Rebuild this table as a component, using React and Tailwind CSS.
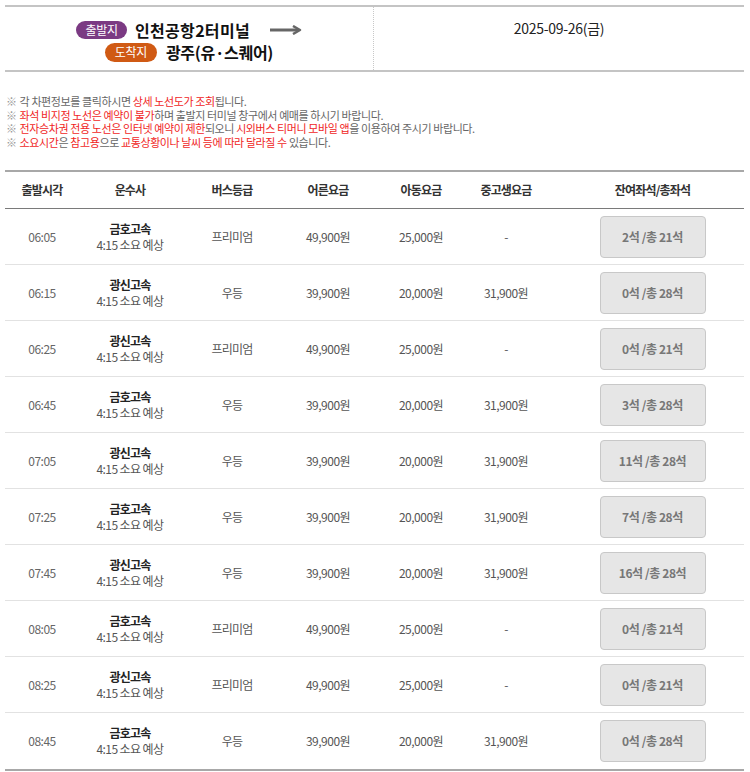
import React from 'react';

const rows = [
  { time: '06:05', company: '금호고속', grade: '프리미엄', adult: '49,900원', child: '25,000원', teen: '-', seats: '2석 /총 21석' },
  { time: '06:15', company: '광신고속', grade: '우등', adult: '39,900원', child: '20,000원', teen: '31,900원', seats: '0석 /총 28석' },
  { time: '06:25', company: '광신고속', grade: '프리미엄', adult: '49,900원', child: '25,000원', teen: '-', seats: '0석 /총 21석' },
  { time: '06:45', company: '금호고속', grade: '우등', adult: '39,900원', child: '20,000원', teen: '31,900원', seats: '3석 /총 28석' },
  { time: '07:05', company: '광신고속', grade: '우등', adult: '39,900원', child: '20,000원', teen: '31,900원', seats: '11석 /총 28석' },
  { time: '07:25', company: '금호고속', grade: '우등', adult: '39,900원', child: '20,000원', teen: '31,900원', seats: '7석 /총 28석' },
  { time: '07:45', company: '광신고속', grade: '우등', adult: '39,900원', child: '20,000원', teen: '31,900원', seats: '16석 /총 28석' },
  { time: '08:05', company: '금호고속', grade: '프리미엄', adult: '49,900원', child: '25,000원', teen: '-', seats: '0석 /총 21석' },
  { time: '08:25', company: '광신고속', grade: '프리미엄', adult: '49,900원', child: '25,000원', teen: '-', seats: '0석 /총 21석' },
  { time: '08:45', company: '금호고속', grade: '우등', adult: '39,900원', child: '20,000원', teen: '31,900원', seats: '0석 /총 28석' },
];

const headers = ['출발시각', '운수사', '버스등급', '어른요금', '아동요금', '중고생요금', '잔여좌석/총좌석'];

const cols = 'grid grid-cols-[74px_102px_102px_90px_96px_74px_1fr]';

function Red({ children }) {
  return <span className="text-[#f01e1e]">{children}</span>;
}

function Mark() {
  return <span className="mr-[3px] text-[#999]">※</span>;
}

export default function App() {
  return (
    <div
      className="w-[750px] bg-white px-[5px] pt-[5px] text-[#555]"
      style={{ fontFamily: '"Noto Sans CJK KR", "Noto Sans", sans-serif' }}
    >
      {/* Route header */}
      <div className="flex w-[739px] border-y-2 border-[#c4c4c4] h-[67px]">
        <div className="flex w-[369px] flex-col items-center border-r border-dotted border-[#c8c8c8] pt-[13px]">
          <div className="flex items-center">
            <span className="flex h-[18px] w-[51px] items-center justify-center rounded-full bg-[#7b3a83] text-[12px] tracking-[-0.3px] text-white">
              출발지
            </span>
            <span className="ml-[8px] text-[16px] font-bold leading-[20px] tracking-[0.3px] text-[#111]">인천공항2터미널</span>
            <svg className="ml-[20px]" width="32" height="10" viewBox="0 0 32 10">
              <line x1="0" y1="5" x2="29" y2="5" stroke="#666" strokeWidth="3" />
              <polyline points="23,1 30,5 23,9" fill="none" stroke="#666" strokeWidth="2.5" strokeLinejoin="round" />
            </svg>
          </div>
          <div className="mt-[2px] flex items-center">
            <span className="flex h-[19px] w-[52px] items-center justify-center rounded-full bg-[#d05a14] text-[12px] tracking-[-0.3px] text-white">
              도착지
            </span>
            <span className="ml-[9px] text-[16px] font-bold leading-[20px] tracking-[-0.3px] text-[#111]">광주(유·스퀘어)</span>
          </div>
        </div>
        <div className="flex flex-1 justify-center pt-[11px] text-[14px] leading-[20px] tracking-[-0.3px] text-[#222]">
          2025-09-26(금)
        </div>
      </div>

      {/* Notices */}
      <div className="mt-[23px] pl-[1px] text-[11px] leading-[13.5px] tracking-[-0.4px] text-[#666]">
        <p>
          <Mark />각 차편정보를 클릭하시면 <Red>상세 노선도가 조회</Red>됩니다.
        </p>
        <p>
          <Mark />
          <Red>좌석 비지정 노선은 예약이 불가</Red>하며 출발지 터미널 창구에서 예매를 하시기 바랍니다.
        </p>
        <p>
          <Mark />
          <Red>전자승차권 전용 노선은 인터넷 예약이 제한</Red>되오니 <Red>시외버스 티머니 모바일 앱</Red>을 이용하여 주시기 바랍니다.
        </p>
        <p>
          <Mark />
          <Red>소요시간</Red>은 <Red>참고용</Red>으로 <Red>교통상황이나 날씨 등에 따라 달라질 수</Red> 있습니다.
        </p>
      </div>

      {/* Timetable */}
      <div className="mt-[21px] w-[739px] border-t-2 border-[#a8a8a8] border-b-2 border-b-[#a8a8a8]">
        <div className={`${cols} h-[37px] items-center border-b border-[#7a7a7a] text-[12px] font-bold tracking-[-0.8px] text-[#333]`}>
          {headers.map((h, i) => (
            <div key={h} className={i === 6 ? 'pl-[18px] text-center' : 'text-center'}>
              {h}
            </div>
          ))}
        </div>
        {rows.map((r, i) => (
          <div
            key={r.time}
            className={`${cols} h-[56px] items-center text-[12px] tracking-[-0.5px] text-[#555] ${i < rows.length - 1 ? 'border-b border-[#e2e2e2]' : ''}`}
          >
            <div className="text-center text-[#666]">{r.time}</div>
            <div className="flex flex-col items-center leading-[16px]">
              <span className="font-bold tracking-[-0.8px] text-[#222]">{r.company}</span>
              <span className="tracking-[-0.6px]">4:15 소요 예상</span>
            </div>
            <div className="text-center tracking-[-0.8px]">{r.grade}</div>
            <div className="text-center">{r.adult}</div>
            <div className="text-center">{r.child}</div>
            <div className="text-center">{r.teen}</div>
            <div className="flex justify-center pl-[18px]">
              <button className="h-[42px] w-[106px] rounded-[4px] border border-[#c8c8c8] bg-[#e6e6e6] text-[12px] font-bold tracking-[-0.4px] text-[#777]">
                {r.seats}
              </button>
            </div>
          </div>
        ))}
      </div>
    </div>
  );
}
